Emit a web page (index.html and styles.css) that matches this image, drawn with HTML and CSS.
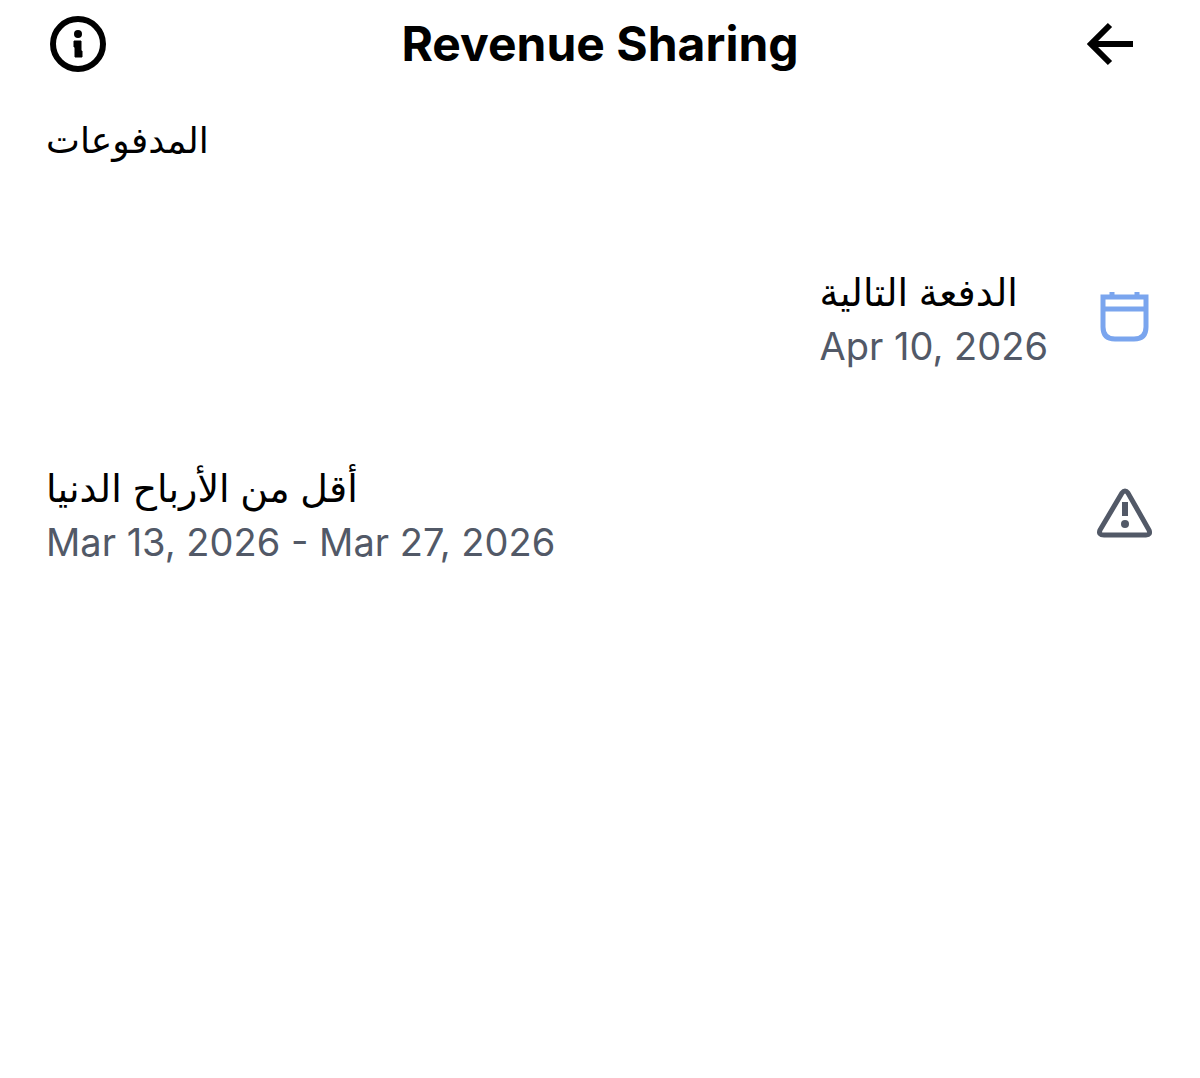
FILE: index.html
```html
<!DOCTYPE html>
<html lang="ar" dir="rtl">
<head>
<meta charset="UTF-8">
<meta name="viewport" content="width=device-width, initial-scale=1">
<title>Revenue Sharing</title>
<link rel="stylesheet" href="styles.css">
</head>
<body>

<header class="head">
	<button type="button" class="btn" aria-label="رجوع">
		<svg width="64" height="56" viewBox="0 0 64 56" fill="none" stroke="#000" stroke-width="6">
			<path d="M47 28H6M24 9L5 28L24 47"/>
		</svg>
	</button>
	<h1 dir="ltr">Revenue Sharing</h1>
	<button type="button" class="btn" aria-label="معلومات">
		<svg width="64" height="56" viewBox="0 0 64 56">
			<circle cx="28" cy="28" r="25" fill="none" stroke="#000" stroke-width="6"/>
			<circle cx="28" cy="18" r="4"/>
			<path d="M24 25H31V35H32V41H25V31H24Z" stroke="#000" stroke-linejoin="round"/>
		</svg>
	</button>
</header>

<main class="main">
	<h2>المدفوعات</h2>

	<ul class="list">
		<li class="row">
			<svg class="icon" width="60" height="60" viewBox="0 0 60 60" fill="none" stroke="#7aa5ee" stroke-width="5">
				<path d="M9 9H52V39Q52 51 40 51H21Q9 51 9 39ZM9 21H52M18 4V9M43 4V9"/>
			</svg>
			<div class="text">
				<h3>الدفعة التالية</h3>
				<p dir="ltr">Apr 10, 2026</p>
			</div>
		</li>
		<li class="row">
			<svg class="icon" width="60" height="60" viewBox="0 0 60 60">
				<path d="M28 9Q31 5 34 9L55 46Q57 51 52 51H10Q4 51 6 46Z" fill="none" stroke="#525967" stroke-width="5"/>
				<path d="M28 18H34V32H28Z" fill="#525967"/>
				<circle cx="31" cy="40" r="4" fill="#525967"/>
			</svg>
			<div class="text wide">
				<h3>أقل من الأرباح الدنيا</h3>
				<p dir="ltr">Mar 13, 2026 - Mar 27, 2026</p>
			</div>
		</li>
	</ul>
</main>

</body>
</html>
```
FILE: styles.css
```css
body {
	margin: 0;
	background-color: #fff;
	color: #000;
	font-family: Inter, "DejaVu Sans", sans-serif;
}

h1, h2, h3, p {
	margin: 0;
}

.head {
	display: flex;
	justify-content: space-between;
	align-items: center;
	height: 88px;
	padding: 0 50px;
}

.head h1 {
	font-size: 48px;
	font-weight: 700;
	line-height: 60px;
}

.btn {
	padding: 0;
	border: 0;
	background: none;
	cursor: pointer;
}

.btn svg {
	display: block;
}

.main {
	padding: 22px 46px;
}

.main h2 {
	font-size: 36px;
	font-weight: 400;
	line-height: 60px;
	text-align: left;
}

.list {
	margin: 94px 0 0;
	padding: 0;
	list-style: none;
}

.row {
	display: flex;
	align-items: center;
	gap: 46px;
	margin-bottom: 88px;
}

.icon {
	flex: none;
}

.text {
	text-align: left;
}

.wide {
	flex: 1;
}

.text h3 {
	font-size: 38px;
	font-weight: 400;
	line-height: 56px;
}

.text p {
	color: #525967;
	font-size: 38px;
	line-height: 52px;
}
```
